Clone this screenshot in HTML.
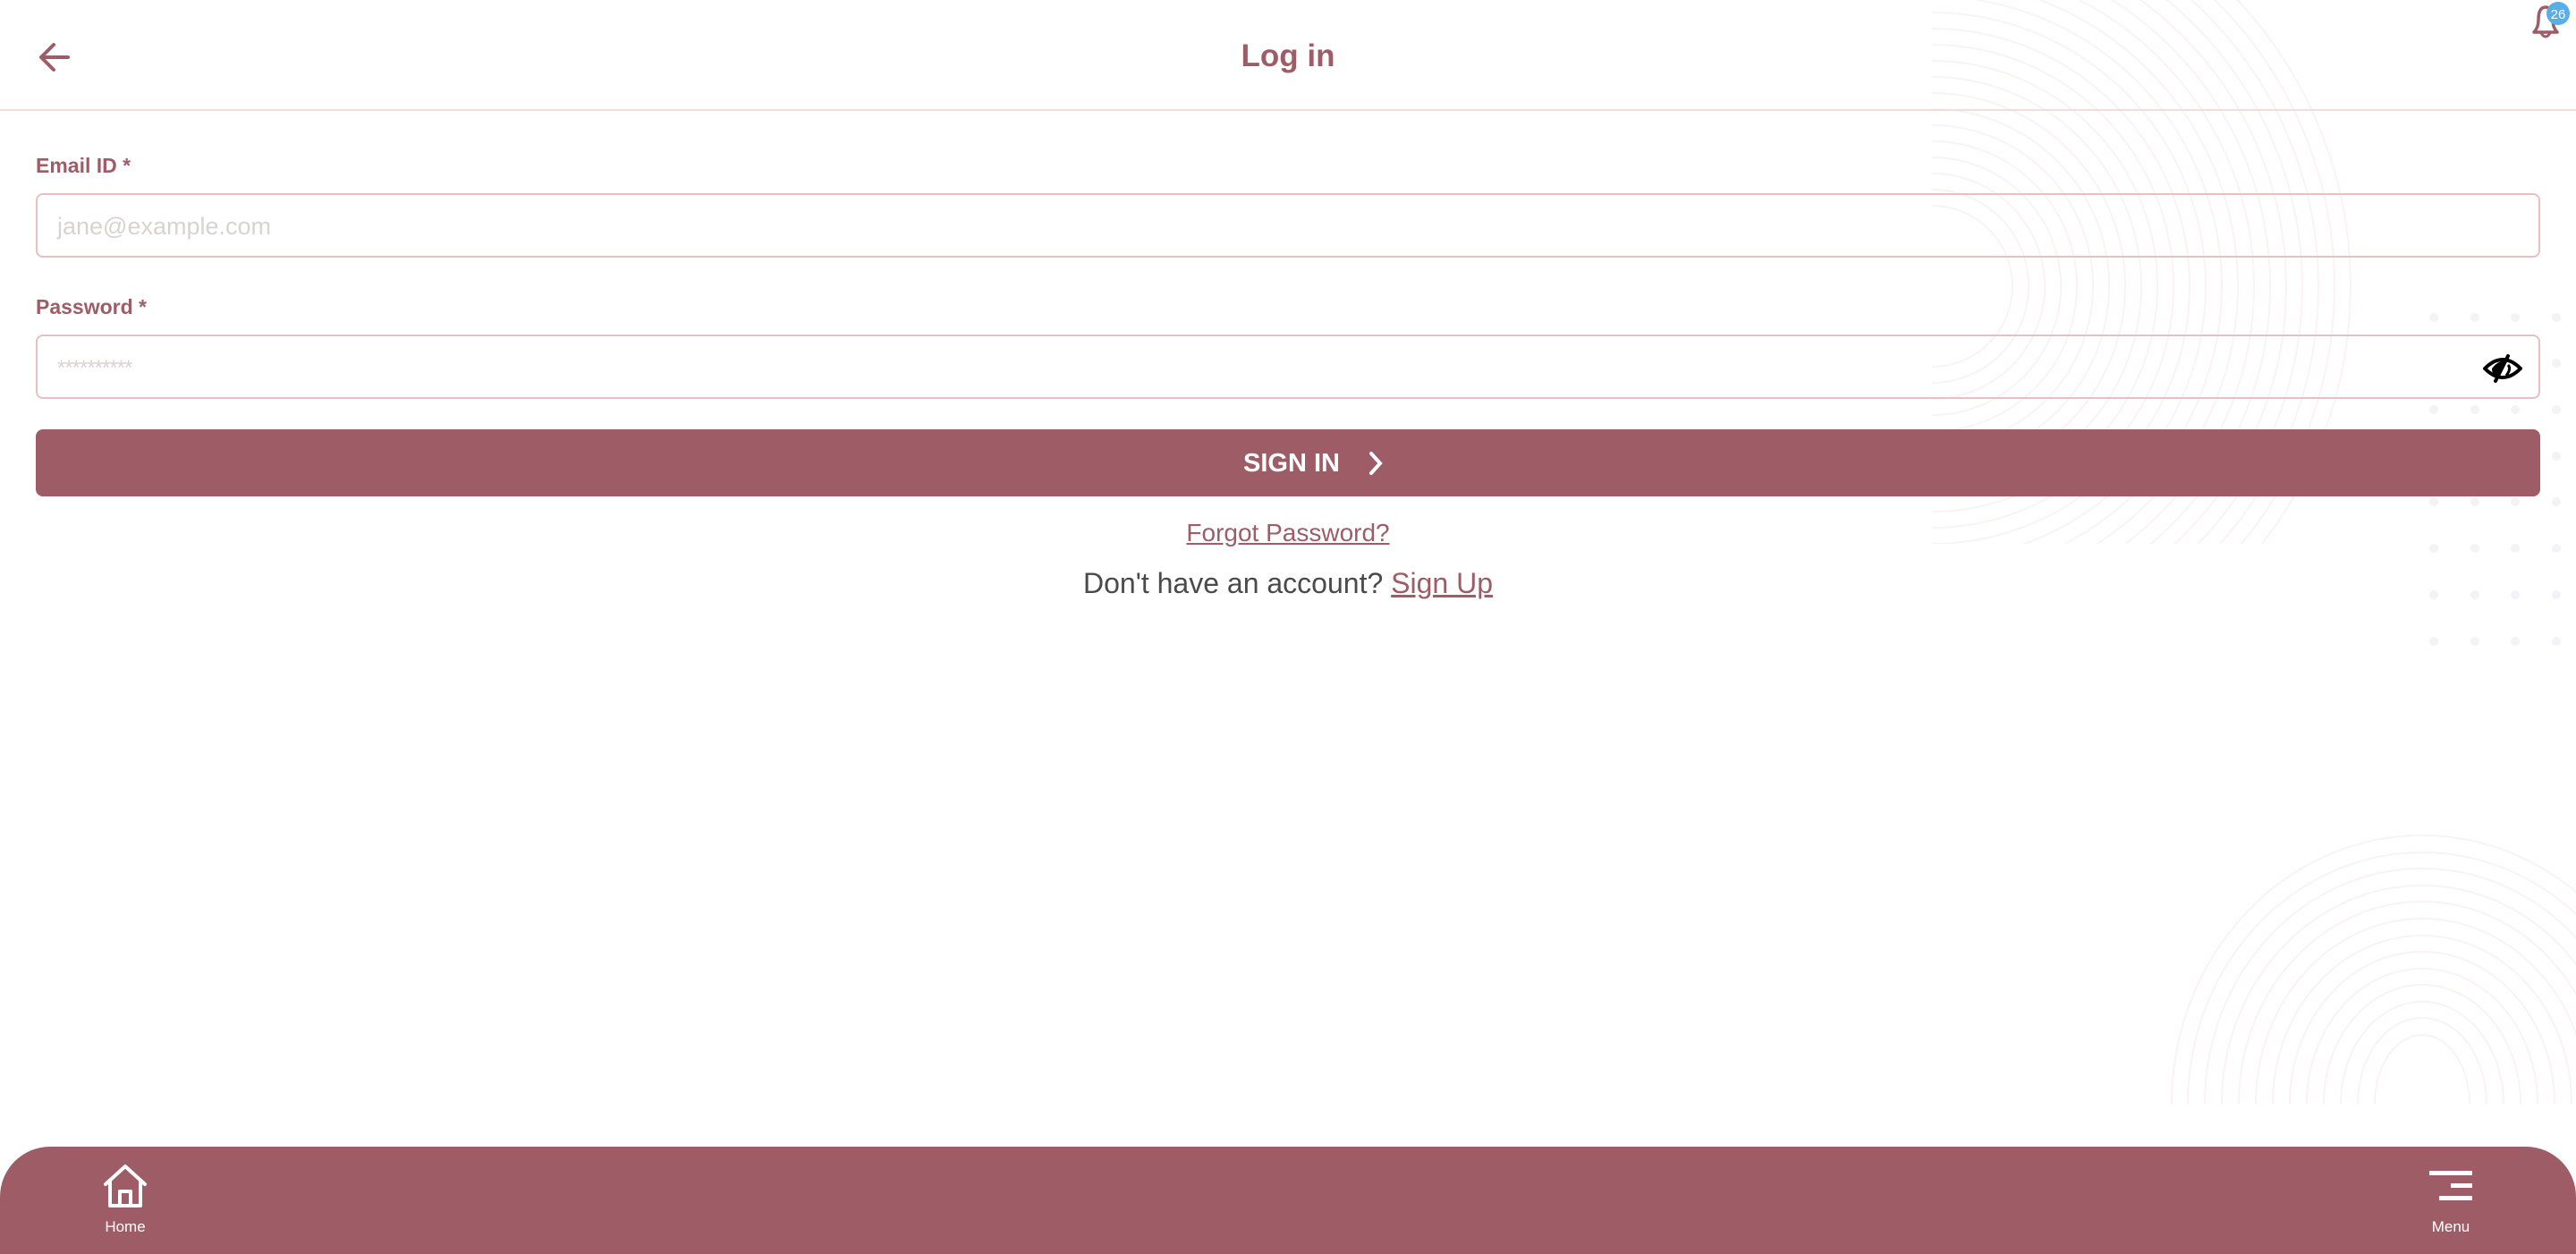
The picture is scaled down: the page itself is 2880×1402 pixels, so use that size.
<!DOCTYPE html>
<html><head><meta charset="utf-8"><style>
*{margin:0;padding:0;box-sizing:border-box}
html,body{width:2880px;height:1402px;overflow:hidden;background:#fff;font-family:"Liberation Sans",Arial,sans-serif}
#wrap{position:relative;width:2880px;height:1402px;overflow:hidden}
.abs{position:absolute}
svg{display:block}
.label{position:absolute;left:40px;font-size:23px;font-weight:bold;color:#9e5d66}
.input{position:absolute;left:40px;width:2800px;height:72px;border:2px solid #e8c0c0;border-radius:8px;background:transparent}
.ph{position:absolute;left:22px;top:20px;font-size:27px;color:#d9d2d2}
</style></head><body><div id="wrap">
<svg class="abs" style="left:0;top:0" width="2880" height="1402">
<defs>
<clipPath id="c1"><rect x="2160" y="0" width="480" height="608"/></clipPath>
<clipPath id="c2"><rect x="2400" y="900" width="480" height="334"/></clipPath>
</defs>
<g clip-path="url(#c1)" fill="none" stroke="#faf3f3" stroke-width="2">
<circle cx="2160" cy="320" r="90"/><circle cx="2160" cy="320" r="108"/><circle cx="2160" cy="320" r="126"/><circle cx="2160" cy="320" r="144"/><circle cx="2160" cy="320" r="162"/><circle cx="2160" cy="320" r="180"/><circle cx="2160" cy="320" r="198"/><circle cx="2160" cy="320" r="216"/><circle cx="2160" cy="320" r="234"/><circle cx="2160" cy="320" r="252"/><circle cx="2160" cy="320" r="270"/><circle cx="2160" cy="320" r="288"/><circle cx="2160" cy="320" r="306"/><circle cx="2160" cy="320" r="324"/><circle cx="2160" cy="320" r="342"/><circle cx="2160" cy="320" r="360"/><circle cx="2160" cy="320" r="378"/><circle cx="2160" cy="320" r="396"/><circle cx="2160" cy="320" r="414"/><circle cx="2160" cy="320" r="432"/><circle cx="2160" cy="320" r="450"/><circle cx="2160" cy="320" r="468"/>
</g>
<g clip-path="url(#c2)" fill="none" stroke="#f9f3f3" stroke-width="2">
<ellipse cx="2708" cy="1234" rx="53" ry="77"/><ellipse cx="2708" cy="1234" rx="72" ry="96"/><ellipse cx="2708" cy="1234" rx="91" ry="114"/><ellipse cx="2708" cy="1234" rx="110" ry="133"/><ellipse cx="2708" cy="1234" rx="129" ry="151"/><ellipse cx="2708" cy="1234" rx="148" ry="170"/><ellipse cx="2708" cy="1234" rx="167" ry="188"/><ellipse cx="2708" cy="1234" rx="186" ry="207"/><ellipse cx="2708" cy="1234" rx="205" ry="226"/><ellipse cx="2708" cy="1234" rx="224" ry="244"/><ellipse cx="2708" cy="1234" rx="243" ry="263"/><ellipse cx="2708" cy="1234" rx="262" ry="281"/><ellipse cx="2708" cy="1234" rx="280" ry="300"/>
</g>
<g fill="#f3f3f7">
<circle cx="2721" cy="355" r="5"/><circle cx="2767" cy="355" r="5"/><circle cx="2812" cy="355" r="5"/><circle cx="2858" cy="355" r="5"/>
<circle cx="2858" cy="406" r="5"/>
<circle cx="2721" cy="458" r="5"/><circle cx="2767" cy="458" r="5"/><circle cx="2812" cy="458" r="5"/><circle cx="2858" cy="458" r="5"/>
<circle cx="2858" cy="510" r="5"/>
<circle cx="2721" cy="561" r="5"/><circle cx="2767" cy="561" r="5"/><circle cx="2812" cy="561" r="5"/><circle cx="2858" cy="561" r="5"/>
<circle cx="2721" cy="613" r="5"/><circle cx="2767" cy="613" r="5"/><circle cx="2812" cy="613" r="5"/><circle cx="2858" cy="613" r="5"/>
<circle cx="2721" cy="665" r="5"/><circle cx="2767" cy="665" r="5"/><circle cx="2812" cy="665" r="5"/><circle cx="2858" cy="665" r="5"/>
<circle cx="2721" cy="717" r="5"/><circle cx="2767" cy="717" r="5"/><circle cx="2812" cy="717" r="5"/><circle cx="2858" cy="717" r="5"/>
</g>
<line x1="0" y1="123" x2="2880" y2="123" stroke="#f2dcdc" stroke-width="2"/>
<path d="M76 64 H46 M60 50 L46 64 L60 78" fill="none" stroke="#9e5d66" stroke-width="4" stroke-linecap="round" stroke-linejoin="round"/>
<path d="M2833 36 Q2838 31 2838 22 Q2838 8 2846 8 Q2854 8 2854 22 Q2854 31 2859 36 Z" fill="none" stroke="#9e5d66" stroke-width="3.5" stroke-linejoin="round"/>
<path d="M2841 37 Q2846 45 2851 37" fill="none" stroke="#9e5d66" stroke-width="3"/>
<circle cx="2860" cy="15" r="13" fill="#5aaee8"/>
<text x="2860" y="21" font-size="15" fill="#fff" text-anchor="middle" font-family="Liberation Sans">26</text>
</svg>
<div class="abs" style="left:0;top:43px;width:2880px;text-align:center;font-size:35px;font-weight:bold;color:#9e5d66">Log in</div>

<div class="label" style="top:172px">Email ID *</div>
<div class="input" style="top:216px"><div class="ph">jane@example.com</div></div>
<div class="label" style="top:330px">Password *</div>
<div class="input" style="top:374px"><div class="ph" style="top:22px;font-size:24px;letter-spacing:-1px">**********</div>
<svg class="abs" style="left:2734px;top:18px" width="44" height="36" viewBox="0 0 44 36">
<path d="M2 18 Q22 -2 42 18 Q22 38 2 18 Z" fill="none" stroke="#000" stroke-width="4"/>
<path d="M10 18 Q16 10 24 9 L14 28 Q10 24 10 18Z" fill="#000"/>
<line x1="28" y1="4" x2="14" y2="32" stroke="#000" stroke-width="4" stroke-linecap="round"/>
<path d="M28 14 Q32 18 26 26" fill="none" stroke="#000" stroke-width="3"/>
</svg></div>

<div class="abs" style="left:40px;top:480px;width:2800px;height:75px;background:#9e5d66;border-radius:8px"></div>
<div class="abs" style="left:1390px;top:502px;font-size:29px;font-weight:bold;color:#fff">SIGN IN</div>
<svg class="abs" style="left:1528px;top:503px" width="20" height="30"><path d="M5 4 L15 15 L5 26" fill="none" stroke="#fff" stroke-width="4" stroke-linecap="round"/></svg>

<div class="abs" style="left:0;top:580px;width:2880px;text-align:center;font-size:28px;color:#9e5d66;text-decoration:underline">Forgot Password?</div>
<div class="abs" style="left:0;top:634px;width:2880px;text-align:center;font-size:32px;color:#4a4a4a">Don't have an account? <span style="color:#9e5d66;text-decoration:underline">Sign Up</span></div>

<div class="abs" style="left:0;top:1282px;width:2880px;height:120px;background:#9e5d66;border-radius:56px 56px 0 0"></div>
<svg class="abs" style="left:112px;top:1300px" width="56" height="52" viewBox="0 0 56 52">
<path d="M6 24 L28 4 L50 24 M11 20 V48 H45 V20 M22 48 V32 H34 V48" fill="none" stroke="#fff" stroke-width="4" stroke-linejoin="round" stroke-linecap="round"/>
</svg>
<div class="abs" style="left:100px;top:1362px;width:80px;text-align:center;font-size:17px;color:#fff">Home</div>
<div class="abs" style="left:2716px;top:1309px;width:48px;height:5px;background:#fff"></div>
<div class="abs" style="left:2740px;top:1323px;width:24px;height:5px;background:#fff"></div>
<div class="abs" style="left:2727px;top:1337px;width:37px;height:5px;background:#fff"></div>
<div class="abs" style="left:2700px;top:1362px;width:80px;text-align:center;font-size:17px;color:#fff">Menu</div>
</div></body></html>
